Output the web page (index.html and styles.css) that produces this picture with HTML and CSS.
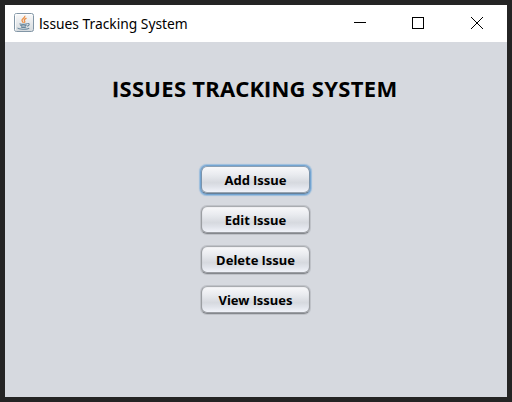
FILE: index.html
```html
<!DOCTYPE html>
<html lang="en">
<head>
<meta charset="utf-8">
<title>Issues Tracking System</title>
<link rel="stylesheet" href="styles.css">
</head>
<body>
<div class="window">
  <header class="titlebar">
    <svg class="app-icon" width="20" height="20" viewBox="0 0 20 20">
      <defs><linearGradient id="tile" x2="0" y2="1"><stop stop-color="#fafafa"/><stop offset="1" stop-color="#d5dade"/></linearGradient></defs>
      <rect x=".5" y=".5" width="19" height="18" rx="2" fill="url(#tile)" stroke="#8296a6"/>
      <path d="M1.5 17.5V1.5H18" fill="none" stroke="#fff" opacity=".8"/>
      <path d="M10.8 2.8c.8 2-3.3 2.9-2.8 4.900.2.9 1.200 1.300 1.200 2.300M12.500 5.200c-2 1-2.800 1.600-1.900 2.700.5.7.3 1.300-.4 1.900" fill="none" stroke="#ec9148" stroke-width="1.300"/>
      <path d="M5.500 10.700c2 .8 5.600.7 7.500 0M6.300 12.200c1.500.8 4.700.8 6.200 0M7 13.900c1.400.7 3.700.7 5.200 0M13.300 10.500c2.700-.5 2.400 2.100-.3 2.700M4 14.800c-.7 1.700 9.500 1.900 11.200.3" fill="none" stroke="#66869c" stroke-width="1.100"/>
    </svg>
    <span class="caption"><span class="cap-i">I</span>ssues Tracking System</span>
    <svg class="controls" width="132" height="14" viewBox="0 0 132 14" fill="none" stroke="#000" stroke-width="1">
      <path d="M1 6.500H13"/>
      <rect x="59.500" y="1.500" width="11" height="11"/>
      <path d="M118 1L130 13M130 1L118 13"/>
    </svg>
  </header>
  <main class="content">
    <h1 class="heading"><span class="cap-i">I</span>SSUES TRACK<span class="cap-i">I</span>NG SYSTEM</h1>
    <div class="actions">
      <button class="action focused">Add <span class="cap-i">I</span>ssue</button>
      <button class="action">Edit <span class="cap-i">I</span>ssue</button>
      <button class="action">Delete <span class="cap-i">I</span>ssue</button>
      <button class="action">View <span class="cap-i">I</span>ssues</button>
    </div>
  </main>
</div>
</body>
</html>
```
FILE: styles.css
```css
* { box-sizing: border-box; }
body {
  margin: 0;
  height: 402px;
  padding: 5px;
  background: #242424;
  font-family: "Noto Sans", sans-serif;
  color: #000;
  overflow: hidden;
}
.window { width: 502px; height: 392px; background: #d6d9df; }
.titlebar {
  height: 37px;
  padding-left: 9px;
  display: flex;
  align-items: center;
  background: #fff;
}
.app-icon { flex: none; margin-top: -1px; }
.caption {
  margin: -2px 0 0 5px;
  font-size: 15px;
  line-height: 20px;
  white-space: nowrap;
  transform: scaleX(0.92);
  transform-origin: left;
}
/* sans capital I without crossbars */
.cap-i { font-family: Roboto, sans-serif; line-height: 1; }
.controls { flex: none; margin: -1px 22px 0 auto; }
.content { display: flex; flex-direction: column; align-items: center; padding-right: 2px; }
.heading {
  margin: 31px 0 0;
  font-size: 22px;
  line-height: 30px;
  font-weight: 700;
  letter-spacing: 0.3px;
  white-space: nowrap;
}
.heading .cap-i { font-size: 21px; letter-spacing: 0.8px; -webkit-text-stroke: 0.4px #000; }
.actions { margin-top: 63px; display: flex; flex-direction: column; gap: 12px; }
.action {
  width: 109px;
  height: 28px;
  padding: 0 0 0 1px;
  border: 1px solid;
  border-color: #a9acb0 #9b9ea2 #85888d;
  border-radius: 6px;
  background: linear-gradient(#f8f8fa 0, #e9ebef 30%, #d6d9df 60%, #dfe2e9 75%, #f4f6fc 100%) padding-box;
  box-shadow: inset 0 -1px 0 #9b9ea3, inset 0 0 1px #a9acb2, 0 0 0 1px rgba(150, 153, 158, 0.35);
  font: 700 13px/18px "Noto Sans", sans-serif;
  color: #000;
  white-space: nowrap;
}
.focused {
  border-color: #8ba0b4 #7a93ab #667f97;
  outline: none;
  box-shadow: 0 0 0 1px #73a4d1, 0 0 1px 1.5px #9bbddd, inset 0 -1px 0 #98a4b0;
}
```
